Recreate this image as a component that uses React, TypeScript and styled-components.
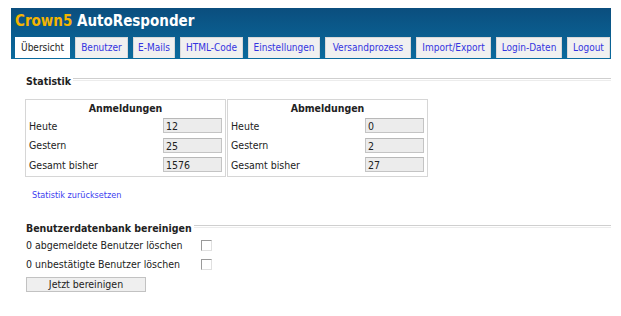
import React from "react";
import styled, { createGlobalStyle } from "styled-components";

const GlobalStyle = createGlobalStyle`
  body {
    margin: 0;
    background: #fff;
    font-family: "DejaVu Sans Condensed", "DejaVu Sans", sans-serif;
    font-size: 10.5px;
    color: #222;
  }
`;

const Page = styled.div`
  width: 600px;
  margin: 8px 0 0 11px;
`;

const Header = styled.header`
  height: 51px;
  background: linear-gradient(#0b4e7e, #0a6b9e);
  display: flex;
  flex-direction: column;
  justify-content: space-between;
`;

const Title = styled.h1`
  margin: 0;
  padding: 4px 0 0 4px;
  font-size: 15px;
  font-weight: bold;
  color: #fff;
  line-height: 18px;
`;

const Brand = styled.span`
  color: #f5b400;
`;

const Tabs = styled.nav`
  display: flex;
  gap: 5px;
  padding: 0 0 1px 4px;
`;

const Tab = styled.a<{ $active?: boolean; $w: number }>`
  box-sizing: border-box;
  width: ${({ $w }) => $w}px;
  height: 21px;
  line-height: 20px;
  text-align: center;
  font-size: 10px;
  border: 1px solid ${({ $active }) => ($active ? "#fff" : "#d9d9d9")};
  border-bottom: none;
  background: ${({ $active }) => ($active ? "#fff" : "#f0f0f0")};
  color: ${({ $active }) => ($active ? "#222" : "#3434e0")};
  text-decoration: none;
  white-space: nowrap;
`;

const Content = styled.main`
  padding: 14px 0 0 14px;
`;

const SectionTitle = styled.div<{ $top?: number }>`
  display: flex;
  align-items: center;
  gap: 2px;
  margin-top: ${({ $top }) => $top ?? 0}px;
  padding-left: 1px;
  font-weight: bold;
  line-height: 16px;

  &::after {
    content: "";
    flex: 1;
    height: 1px;
    margin-top: -3px;
    border-top: 1px solid #cfcfcf;
    border-bottom: 1px solid #ececec;
  }
`;

const Stats = styled.div`
  display: flex;
  gap: 1px;
  margin-top: 10px;
`;

const StatBox = styled.div`
  width: 193px;
  border: 1px solid #d6d6d6;
  padding: 0 3px 1px 3px;
`;

const StatHead = styled.div`
  text-align: center;
  font-weight: bold;
  line-height: 16px;
`;

const StatRow = styled.div`
  display: flex;
  align-items: center;
  justify-content: space-between;
  height: 19.5px;
`;

const Value = styled.div`
  width: 55px;
  height: 13px;
  line-height: 14px;
  padding-left: 2px;
  background: #ececec;
  border: 1px solid #c4c4c4;
  border-top-color: #b8b8b8;
`;

const ResetLink = styled.a`
  display: block;
  margin: 13px 0 0 7px;
  font-size: 9px;
  color: #3c3cf0;
  text-decoration: none;
`;

const CheckRow = styled.div`
  display: flex;
  align-items: center;
  height: 19px;
  padding-left: 1px;
`;

const CheckLabel = styled.span`
  width: 175px;
`;

const Check = styled.span`
  width: 9px;
  height: 9px;
  border: 1px solid #9a9a9a;
  border-right-color: #e0e0e0;
  border-bottom-color: #e0e0e0;
  background: #fff;
`;

const Button = styled.button`
  display: block;
  width: 120px;
  height: 15px;
  margin: 3px 0 0 1px;
  padding: 0;
  font-family: inherit;
  font-size: 10.5px;
  line-height: 13px;
  color: #222;
  background: #efefef;
  border: 1px solid #c2c2c2;
`;

const tabs: [string, number][] = [
  ["Übersicht", 55],
  ["Benutzer", 53],
  ["E-Mails", 42],
  ["HTML-Code", 63],
  ["Einstellungen", 72],
  ["Versandprozess", 86],
  ["Import/Export", 75],
  ["Login-Daten", 66],
  ["Logout", 43],
];

const stats = [
  { title: "Anmeldungen", rows: [["Heute", "12"], ["Gestern", "25"], ["Gesamt bisher", "1576"]] },
  { title: "Abmeldungen", rows: [["Heute", "0"], ["Gestern", "2"], ["Gesamt bisher", "27"]] },
];

export default function App() {
  return (
    <Page>
      <GlobalStyle />
      <Header>
        <Title>
          <Brand>Crown5</Brand> AutoResponder
        </Title>
        <Tabs>
          {tabs.map(([t, w], i) => (
            <Tab key={t} href="#" $w={w} $active={i === 0}>
              {t}
            </Tab>
          ))}
        </Tabs>
      </Header>

      <Content>
        <SectionTitle>Statistik</SectionTitle>
        <Stats>
          {stats.map((box) => (
            <StatBox key={box.title}>
              <StatHead>{box.title}</StatHead>
              {box.rows.map(([label, value]) => (
                <StatRow key={label}>
                  <span>{label}</span>
                  <Value>{value}</Value>
                </StatRow>
              ))}
            </StatBox>
          ))}
        </Stats>
        <ResetLink href="#">Statistik zurücksetzen</ResetLink>

        <SectionTitle $top={20}>Benutzerdatenbank bereinigen</SectionTitle>
        <CheckRow>
          <CheckLabel>0 abgemeldete Benutzer löschen</CheckLabel>
          <Check />
        </CheckRow>
        <CheckRow>
          <CheckLabel>0 unbestätigte Benutzer löschen</CheckLabel>
          <Check />
        </CheckRow>
        <Button>Jetzt bereinigen</Button>
      </Content>
    </Page>
  );
}
